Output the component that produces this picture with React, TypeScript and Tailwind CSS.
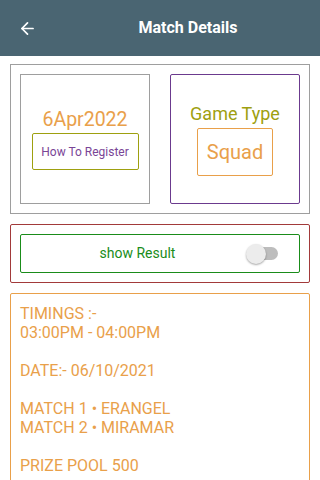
import { ArrowLeft } from "lucide-react";

export default function App() {
  return (
    <div className="w-[320px] h-[480px] overflow-hidden bg-white" style={{ fontFamily: "Roboto, 'Liberation Sans', sans-serif" }}>
      <header className="h-14 bg-[#4a6572] flex items-center">
        <div className="w-14 flex items-center pl-[18px]">
          <ArrowLeft size={19} color="white" strokeWidth={2.2} />
        </div>
        <h1 className="flex-1 text-center text-white font-bold text-[16px]">Match Details</h1>
      </header>

      <div className="mx-[10px] mt-2 border border-[#9e9e9e] p-[9px] grid grid-cols-2 gap-5">
        <div className="h-[130px] border border-[#9e9e9e] flex flex-col items-center justify-center">
          <p className="text-[19.5px] leading-6 text-[#e9a04a]">6Apr2022</p>
          <div className="mt-[1px] w-[107px] h-[37px] border border-[#9ea00f] rounded-[2px] flex items-center justify-center text-[12px] text-[#7a4596]">
            How To Register
          </div>
        </div>
        <div className="h-[130px] border border-[#6b3a8e] rounded-[2px] flex flex-col items-center justify-center">
          <p className="text-[18px] leading-6 text-[#9ea00f]">Game Type</p>
          <div className="mt-[2px] w-[76px] h-[48px] border border-[#e9a04a] rounded-[2px] flex items-center justify-center text-[20px] text-[#e9a04a]">
            Squad
          </div>
        </div>
      </div>

      <div className="mx-[10px] mt-[10px] border border-[#a23a3a] rounded-[2px] p-[9px]">
        <div className="h-[39px] border border-[#1a8c1a] rounded-[2px] flex items-center">
          <span className="flex-1 text-center text-[14px] text-[#1a8c1a] pl-[8px]">show Result</span>
          <div className="relative w-[32px] h-[20px] mr-[21px] flex items-center">
            <div className="absolute left-[3px] right-0 h-[13px] rounded-full bg-[#bdbdbd]" />
            <div className="absolute left-0 w-[20px] h-[20px] rounded-full bg-[#ececec] shadow-[0_1px_2px_rgba(0,0,0,0.35)]" />
          </div>
        </div>
      </div>

      <div className="mx-[10px] mt-[10px] border border-[#e9a04a] rounded-[2px] px-[9px] pt-[10px] pb-4 text-[16px] leading-[19px] text-[#e9a04a]">
        <p>TIMINGS :-</p>
        <p>03:00PM - 04:00PM</p>
        <p>&nbsp;</p>
        <p>DATE:- 06/10/2021</p>
        <p>&nbsp;</p>
        <p>MATCH 1 • ERANGEL</p>
        <p>MATCH 2 • MIRAMAR</p>
        <p>&nbsp;</p>
        <p>PRIZE POOL 500</p>
      </div>
    </div>
  );
}
